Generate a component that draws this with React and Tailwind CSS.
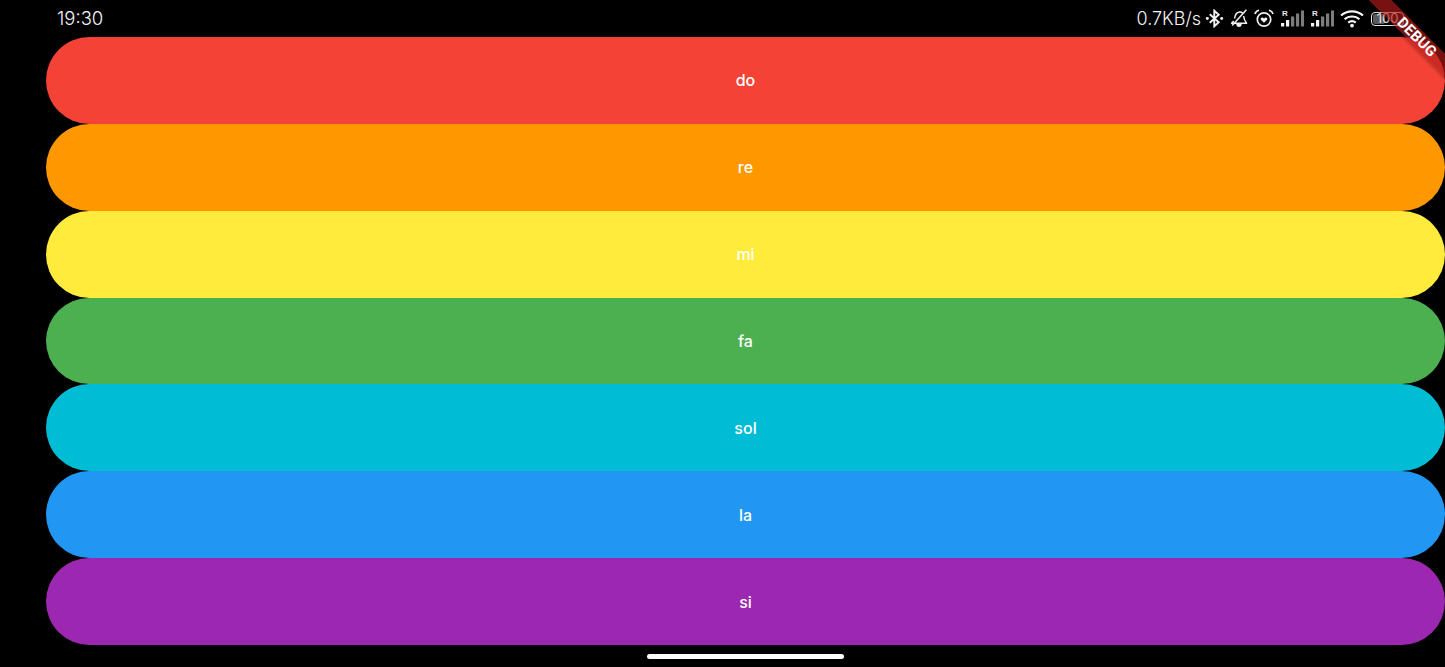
const rows = [
  ["do", "bg-[#f44336]"],
  ["re", "bg-[#ff9800]"],
  ["mi", "bg-[#ffeb3b]"],
  ["fa", "bg-[#4caf50]"],
  ["sol", "bg-[#00bcd4]"],
  ["la", "bg-[#2196f3]"],
  ["si", "bg-[#9c27b0]"],
];

function Bluetooth() {
  return (
    <svg width="19" height="19" viewBox="0 0 18 18" fill="none" stroke="#f2f2f2" strokeWidth="1.8">
      <path d="M4.5 5 L13 12.5 L8.8 16.4 V1.6 L13 5.5 L4.5 13" />
      <circle cx="2.2" cy="9" r="1.4" fill="#f2f2f2" stroke="none" />
      <circle cx="15.8" cy="9" r="1.4" fill="#f2f2f2" stroke="none" />
    </svg>
  );
}

function BellOff() {
  return (
    <svg width="18" height="19" viewBox="0 0 18 19" fill="none" stroke="#f2f2f2" strokeWidth="1.5" strokeLinejoin="round">
      <path d="M4.6 9.5 C5 6 6 3.4 9.5 3 C11 2.9 12 3.3 12.8 4.2" />
      <path d="M13.6 7 C14 10 14.4 12 16.6 14.2 H1.6 L3.6 12" />
      <path d="M16.4 0.8 L2.2 16.6" />
      <path d="M7 15.6 C7.4 17.8 10.6 17.8 11 15.6 Z" fill="#f2f2f2" />
    </svg>
  );
}

function Alarm() {
  return (
    <svg width="20" height="19" viewBox="0 0 20 19" fill="none" stroke="#f2f2f2" strokeWidth="1.7">
      <circle cx="10" cy="10.5" r="6.7" />
      <path d="M1 5 C1.6 3 3 1.8 5 1.3" />
      <path d="M19 5 C18.4 3 17 1.8 15 1.3" />
      <path d="M10 13.8 L6.9 10.8 C5.8 9.2 8.2 7.4 10 9.4 C11.8 7.4 14.2 9.2 13.1 10.8 Z" fill="#f2f2f2" stroke="none" />
    </svg>
  );
}

function Signal() {
  return (
    <div className="relative w-[23px] h-[19px]">
      <span className="absolute left-[1px] top-[0px] text-[8px] leading-[9px] font-bold text-[#e8e8e8] font-['Liberation_Sans',sans-serif]">R</span>
      <svg className="absolute inset-0" width="23" height="19" viewBox="0 0 23 19">
        <rect x="0" y="14" width="3.2" height="3.5" fill="#f4f4f4" />
        <rect x="5" y="11" width="3.2" height="6.5" fill="#f4f4f4" />
        <rect x="10" y="7.5" width="3.2" height="10" fill="#7c7c7c" />
        <rect x="15" y="4.5" width="3.2" height="13" fill="#7c7c7c" />
        <rect x="20" y="1.5" width="3" height="16" fill="#7c7c7c" />
      </svg>
    </div>
  );
}

function Wifi() {
  return (
    <svg width="24" height="19" viewBox="0 0 24 19" fill="none" stroke="#f6f6f6" strokeWidth="2.1">
      <path d="M1 6.6 C7 0.9 17 0.9 23 6.6" />
      <path d="M4.6 10.2 C8.6 6.5 15.4 6.5 19.4 10.2" />
      <path d="M8.2 13.6 C10.4 11.8 13.6 11.8 15.8 13.6" />
      <circle cx="12" cy="16.6" r="1.9" fill="#f6f6f6" stroke="none" />
    </svg>
  );
}

function Battery() {
  return (
    <div className="relative w-[33px] h-[14px] rounded-[4px] border border-[#e8e8e8] overflow-hidden flex items-center justify-center">
      <div className="absolute left-[1px] top-[1px] bottom-[1px] w-[12px] bg-[#5a5a5a] rounded-[2px]" />
      <span className="relative text-[13px] leading-none text-[#e8e8e8] font-['Inter',sans-serif]">100</span>
    </div>
  );
}

export default function App() {
  return (
    <div className="relative w-[1445px] h-[667px] bg-black overflow-hidden font-['Inter',sans-serif]">
      <div className="h-[37px] flex items-center justify-between pl-[57px] pr-[41px]">
        <span className="text-[18.5px] font-light leading-none text-[#f4f4f4]">19:30</span>
        <div className="flex items-center">
          <span className="text-[18px] font-light leading-none text-[#f4f4f4] mr-[3px]">0.7KB/s</span>
          <div className="ml-[1px]"><Bluetooth /></div>
          <div className="ml-[6px]"><BellOff /></div>
          <div className="ml-[6px]"><Alarm /></div>
          <div className="ml-[7px]"><Signal /></div>
          <div className="ml-[7px]"><Signal /></div>
          <div className="ml-[6px]"><Wifi /></div>
          <div className="ml-[7px]"><Battery /></div>
        </div>
      </div>

      <div className="h-[608px] pl-[46px] flex flex-col">
        {rows.map(([label, color]) => (
          <div key={label} className={`flex-1 rounded-full flex items-center justify-center ${color}`}>
            <span className="text-[16px] font-medium text-white">{label}</span>
          </div>
        ))}
      </div>

      <div className="pl-[46px] pt-[9px] flex justify-center">
        <div className="w-[197px] h-[5px] rounded-full bg-white" />
      </div>

      <div className="absolute left-[1353px] top-[29px] w-[128px] h-[16px] rotate-45 bg-[#b71c1c]/65 shadow-[0_2px_3px_rgba(0,0,0,0.25)] flex items-center justify-center">
        <span className="text-[15px] font-bold leading-none tracking-[0.2px] text-white font-['Roboto',sans-serif]">DEBUG</span>
      </div>
    </div>
  );
}
